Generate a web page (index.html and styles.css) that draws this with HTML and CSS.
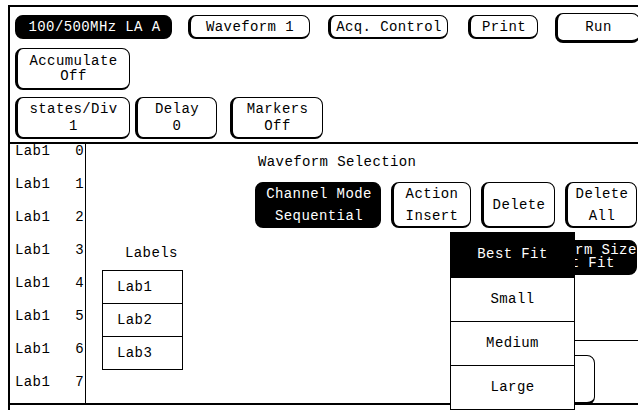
FILE: index.html
```html
<!DOCTYPE html>
<html>
<head>
    <title>Waveform Selection</title>
    <meta charset="utf-8">
    <meta name="viewport" content="width=device-width, initial-scale=1.0">
    <link rel="stylesheet" href="styles.css">
</head>
<body>
    <div id="screen">
        <!-- Top menu keys -->
        <div class="row row-top">
            <div class="key key-dark key-module">100/500MHz LA A</div>
            <div class="key key-menu">Waveform 1</div>
            <div class="key key-acq">Acq. Control</div>
            <div class="key key-print">Print</div>
            <div class="key key-run">Run</div>
        </div>

        <div class="row row-accum">
            <div class="key key-field key-accum"><span>Accumulate</span><span>Off</span></div>
        </div>

        <div class="row row-scale">
            <div class="key key-field key-states"><span>states/Div</span><span>1</span></div>
            <div class="key key-field key-delay"><span>Delay</span><span>0</span></div>
            <div class="key key-field key-markers"><span>Markers</span><span>Off</span></div>
        </div>

        <div class="main">
            <ul class="chan-list">
                <li><span>Lab1</span><span>0</span></li>
                <li><span>Lab1</span><span>1</span></li>
                <li><span>Lab1</span><span>2</span></li>
                <li><span>Lab1</span><span>3</span></li>
                <li><span>Lab1</span><span>4</span></li>
                <li><span>Lab1</span><span>5</span></li>
                <li><span>Lab1</span><span>6</span></li>
                <li><span>Lab1</span><span>7</span></li>
            </ul>

            <div class="dialog">
                <div class="dialog-title">Waveform Selection</div>

                <div class="dialog-keys">
                    <div class="key key-dark key-chmode"><span>Channel Mode</span><span>Sequential</span></div>
                    <div class="key key-action"><span>Action</span><span>Insert</span></div>
                    <div class="key key-delete">Delete</div>
                    <div class="key key-delall"><span>Delete</span><span>All</span></div>
                </div>

                <div class="dialog-lower">
                    <div class="labels">
                        <div class="labels-title">Labels</div>
                        <ul class="labels-box">
                            <li>Lab1</li>
                            <li>Lab2</li>
                            <li>Lab3</li>
                        </ul>
                    </div>

                    <div class="size-area">
                        <div class="key key-dark key-size"><span>Waveform Size</span><span>Best Fit</span></div>
                        <div class="size-rule"></div>
                        <div class="key key-done"></div>
                    </div>
                </div>

                <!-- Pop-up selection list for Waveform Size -->
                <ul class="popup">
                    <li class="selected">Best Fit</li>
                    <li>Small</li>
                    <li>Medium</li>
                    <li>Large</li>
                </ul>
            </div>
        </div>
    </div>
</body>
</html>
```

FILE: styles.css
```css
html, body {
    margin: 0;
    padding: 0;
    overflow: hidden;
    background: #fff;
    color: #000;
    font-family: "Liberation Mono", "DejaVu Sans Mono", monospace;
    font-size: 14px;
    letter-spacing: 0.4px;
}

ul {
    list-style: none;
    margin: 0;
    padding: 0;
}

#screen {
    box-sizing: border-box;
    width: 630px;
    height: 405px;
    margin: 5px 0 0 8px;
    border-top: 2px solid #000;
    border-left: 2px solid #000;
    overflow: hidden;
}

/* Keys */

.key {
    box-sizing: border-box;
    display: flex;
    flex-direction: column;
    align-items: center;
    justify-content: center;
    flex: none;
    border: 1px solid #000;
    border-left-width: 3px;
    border-bottom-width: 2px;
    border-radius: 8px;
    background: #fff;
    white-space: nowrap;
    line-height: 14px;
}

.key-dark {
    background: #000;
    color: #fff;
}

.row {
    display: flex;
    align-items: flex-start;
    padding-left: 5px;
}

.row-top {
    height: 23px;
    padding-top: 8px;
}

.row-top .key {
    height: 24px;
}

.key-module { width: 157px; }
.key-menu { width: 122px; margin-left: 16px; }
.key-acq { width: 120px; margin-left: 18px; }
.key-print { width: 70px; margin-left: 20px; }

.row-top .key-run {
    width: 85px;
    height: 30px;
    margin: -2px 0 0 17px;
    border-bottom-width: 3px;
}

.row-accum {
    margin-top: 10px;
}

.key-field {
    height: 42px;
}

.key-accum {
    width: 115px;
    line-height: 15px;
}

.row-scale {
    margin-top: 7px;
}

.row-scale .key {
    line-height: 17px;
}

.key-states { width: 115px; }
.key-delay { width: 82px; margin-left: 5px; }
.key-markers { width: 93px; margin-left: 13px; }

/* Lower area */

.main {
    display: flex;
    height: 263px;
    box-sizing: border-box;
    margin-top: 3px;
    border-top: 2px solid #000;
    border-bottom: 2px solid #000;
}

.chan-list {
    box-sizing: border-box;
    width: 75px;
    padding: 0 1px 0 5px;
    flex: none;
}

.chan-list li {
    display: flex;
    justify-content: space-between;
    height: 33px;
    line-height: 14px;
}

.dialog {
    position: relative;
    flex: 1;
    border-left: 1px solid #000;
}

.dialog-title {
    margin-top: 11px;
    padding-left: 172px;
    line-height: 14px;
}

.dialog-keys {
    display: flex;
    gap: 10px;
    margin-top: 13px;
    padding-left: 169px;
}

.dialog-keys .key {
    height: 46px;
    line-height: 22px;
}

.key-chmode { width: 126px; }
.key-action { width: 80px; }
.key-delete { width: 74px; }
.key-delall { width: 72px; }

.dialog-lower {
    display: flex;
}

.labels-title {
    margin-top: 18px;
    padding-left: 39px;
    line-height: 14px;
}

.labels-box {
    width: 81px;
    margin: 10px 0 0 16px;
    border: 1px solid #000;
    box-sizing: border-box;
}

.labels-box li {
    height: 32px;
    line-height: 32px;
    padding-left: 14px;
}

.labels-box li + li {
    border-top: 1px solid #000;
}

.size-area {
    display: flex;
    flex-direction: column;
    align-items: flex-end;
    margin-left: auto;
    padding-top: 12px;
}

.key-size {
    width: 117px;
    height: 35px;
    margin-right: 1px;
    line-height: 13px;
}

.size-rule {
    width: 150px;
    margin-top: 65px;
    border-top: 1px solid #000;
}

.key-done {
    width: 115px;
    height: 50px;
    margin: 14px 43px 0 0;
    border-bottom-width: 3px;
}

/* Pop-up list */

.popup {
    position: absolute;
    left: 364px;
    top: 88px;
    width: 125px;
    box-sizing: border-box;
    border: 1px solid #000;
    background: #fff;
    text-align: center;
}

.popup li {
    height: 43px;
    line-height: 43px;
}

.popup li + li {
    border-top: 1px solid #000;
}

.popup .selected {
    height: 44px;
    background: #000;
    color: #fff;
}
```
